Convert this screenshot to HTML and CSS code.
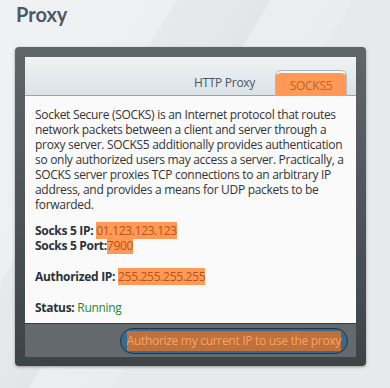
FILE: index.html
```html
<!DOCTYPE html>
<html lang="en">
  <head>
    <meta charset="UTF-8" />
    <meta name="viewport" content="width=device-width, initial-scale=1.0" />
    <title>Proxy</title>
    <link rel="stylesheet" href="styles.css">
  </head>
  <body>
    <h1 class="title">Proxy</h1>

    <div class="frame">
      <div class="panel">
        <div class="tabs">
          <span class="tab">HTTP Proxy</span>
          <span class="tab active">SOCKS5</span>
        </div>

        <div class="content">
          <p class="intro">
            Socket Secure (SOCKS) is an Internet protocol that routes network packets between a client and server through a proxy server. SOCKS5 additionally provides authentication so only authorized users may access a server. Practically, a SOCKS server proxies TCP connections to an arbitrary IP address, and provides a means for UDP packets to be forwarded.
          </p>

          <p class="info">
            <strong>Socks 5 IP:</strong> <span class="mark">01.123.123.123 </span><br />
            <strong>Socks 5 Port:</strong><span class="mark">7900 </span>
          </p>

          <p class="info">
            <strong>Authorized IP:</strong> <span class="mark">255.255.255.255</span>
          </p>

          <p class="info status">
            <strong>Status:</strong> <span class="running">Running</span>
          </p>
        </div>

        <div class="footer">
          <button class="authorize"><span class="mark">Authorize my current IP to use the proxy</span></button>
        </div>
      </div>
    </div>
  </body>
</html>
```

FILE: styles.css
```css
body {
  margin: 0;
  height: 388px;
  font-family: "Open Sans", sans-serif;
  color: #333;
  background-color: #e6e7e8;
  background-image: linear-gradient(
    122deg,
    #f0f1f2 0px,
    #eeeff0 150px,
    #e8e9ea 150px,
    #e4e5e6 230px,
    #ecedee 230px,
    #ebeced 300px,
    #e8e9ea 300px
  );
  background-repeat: no-repeat;
  overflow: hidden;
}
.title {
  margin: 0;
  padding: 2px 0 0 16px;
  height: 45px;
  font-family: Lato, sans-serif;
  font-size: 20px;
  font-weight: bold;
  color: #4b5966;
}
.frame {
  width: 331px;
  margin-left: 15px;
  padding: 10px 10px 9px;
  background: linear-gradient(#606568, #3c4447);
  border-radius: 4px;
  box-shadow: 0 1px 3px rgba(0, 0, 0, 0.35);
}
.panel {
  background: #fafafa;
}
.tabs {
  height: 38px;
  display: flex;
  justify-content: flex-end;
  align-items: flex-end;
  padding-right: 9px;
  background: linear-gradient(#eff3f5, #dbe2e6);
  border-bottom: 1px solid #9aa3a8;
  letter-spacing: -0.3px;
}
.tab {
  font-size: 12px;
  color: #4a5660;
  padding: 0 20px 4px;
}
.tab.active {
  width: 72px;
  height: 25px;
  box-sizing: border-box;
  padding: 4px 0 0;
  margin-bottom: -1px;
  text-align: center;
  background: #ff9955;
  color: #b9652f;
  border: 1px solid #b3b9bd;
  border-bottom: none;
  border-top-width: 2px;
  border-top-color: #f6f8f9;
  box-shadow: 0 -1px 0 #aeb4b8;
  border-radius: 6px 6px 0 0;
}
.content {
  height: 227px;
  box-sizing: border-box;
  padding: 11px 10px 0;
  font-size: 12px;
  line-height: 15px;
  letter-spacing: -0.3px;
}
.content p {
  margin: 0;
}
.intro {
  margin-bottom: 11px !important;
}
.info {
  margin-bottom: 16px !important;
}
.info.status {
  margin-bottom: 0 !important;
}
.info strong {
  color: #2a3138;
}
.mark {
  background: #ff9955;
  color: #b7531c;
}
.running {
  color: #238a2c;
}
.footer {
  height: 33px;
  border-top: 1px solid #353c40;
  background: #63696c;
  display: flex;
  justify-content: flex-end;
  align-items: center;
  padding-right: 8px;
}
.authorize {
  height: 26px;
  padding: 0 6px;
  font-family: "Open Sans", sans-serif;
  font-size: 12px;
  letter-spacing: -0.3px;
  background: #356b90;
  border: 1px solid #1f3447;
  border-radius: 13px;
  cursor: pointer;
}
.authorize .mark {
  display: inline-block;
  padding: 1px 0 2px;
  background: #c0703b;
  color: #f6a466;
}
```
